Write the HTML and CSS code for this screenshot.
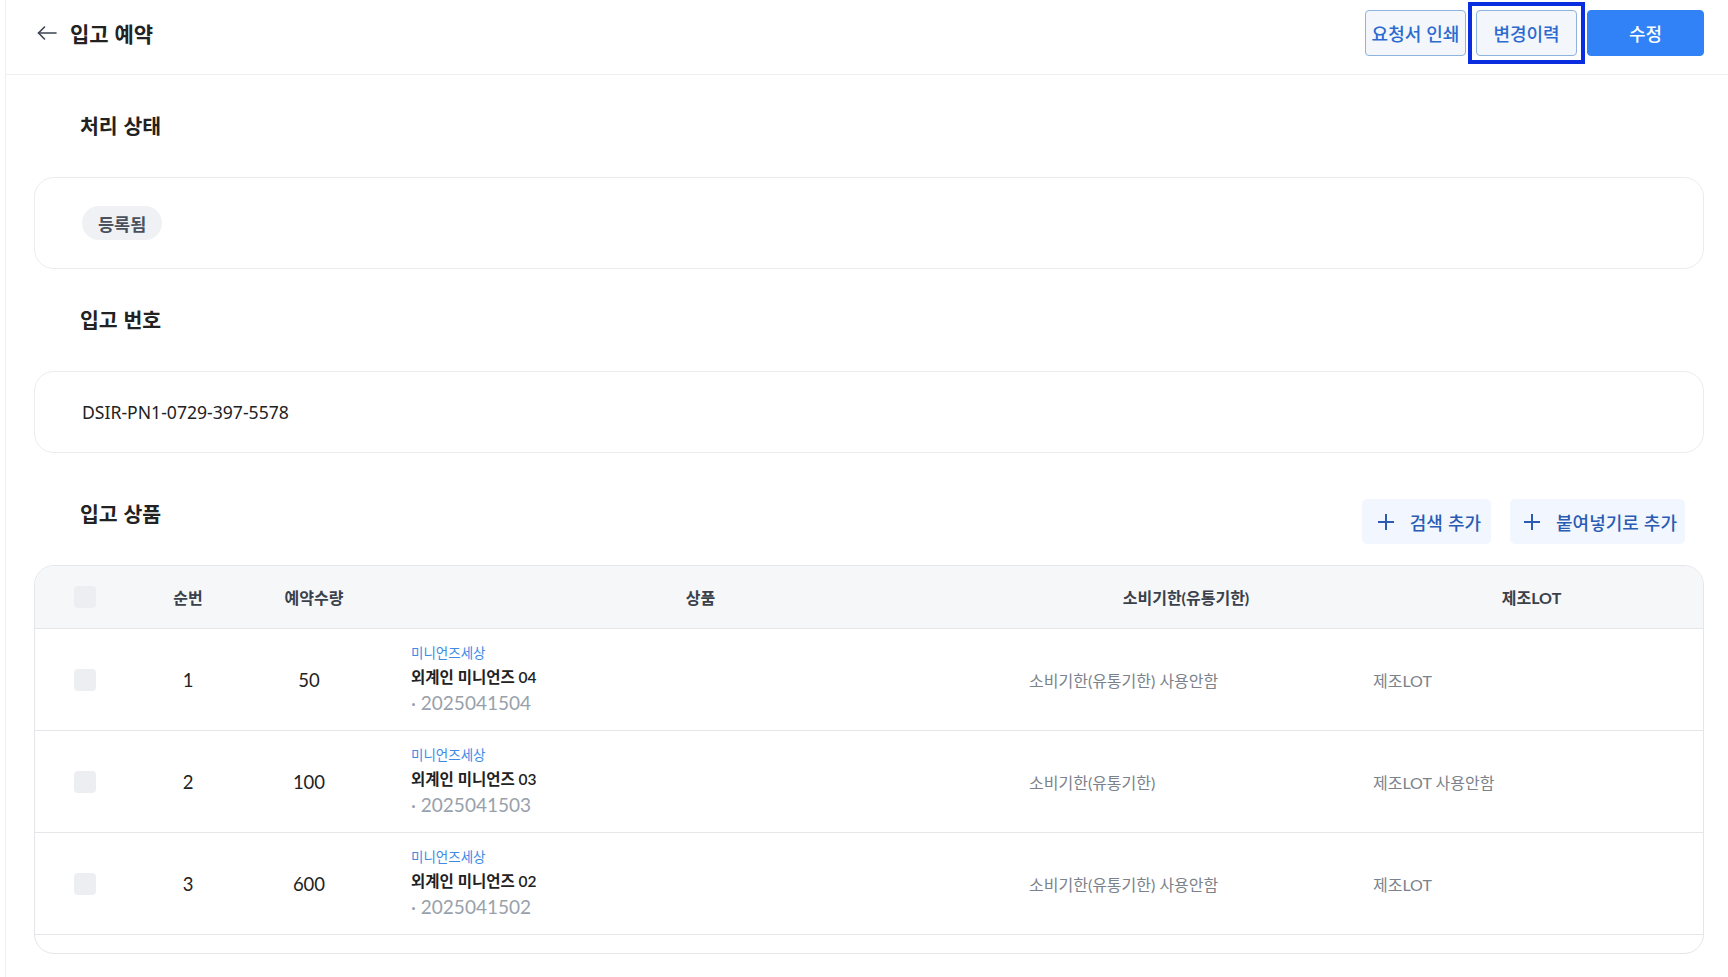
FILE: index.html
```html
<!DOCTYPE html>
<html lang="ko">
<head>
    <meta charset="UTF-8">
    <meta name="viewport" content="width=device-width, initial-scale=1.0">
    <title>입고 예약</title>
    <link rel="stylesheet" href="styles.css">
</head>
<body>
    <div class="page">
        <header class="topbar">
            <div class="topbar-title">
                <button class="back-btn" type="button" aria-label="뒤로">
                    <svg width="20" height="20" viewBox="0 0 20 20" fill="none" stroke="#3d4450" stroke-width="1.6" stroke-linecap="round" stroke-linejoin="round">
                        <path d="M19 10H1.5"/>
                        <path d="M7.5 4L1.5 10L7.5 16"/>
                    </svg>
                </button>
                <h1>입고 예약</h1>
            </div>
            <div class="topbar-actions">
                <button class="btn btn-outline" type="button">요청서 인쇄</button>
                <button class="btn btn-outline is-focused" type="button">변경이력</button>
                <button class="btn btn-primary" type="button">수정</button>
            </div>
        </header>

        <main class="content">
            <!-- 처리 상태 -->
            <section class="section">
                <div class="section-head">
                    <h2>처리 상태</h2>
                </div>
                <div class="card card-status">
                    <span class="badge">등록됨</span>
                </div>
            </section>

            <!-- 입고 번호 -->
            <section class="section">
                <div class="section-head">
                    <h2>입고 번호</h2>
                </div>
                <div class="card card-number">
                    <span class="receipt-no">DSIR-PN1-0729-397-5578</span>
                </div>
            </section>

            <!-- 입고 상품 -->
            <section class="section section-products">
                <div class="section-head">
                    <h2>입고 상품</h2>
                    <div class="head-actions">
                        <button class="btn-add" type="button">
                            <svg width="18" height="18" viewBox="0 0 18 18" fill="none" stroke="#2a5cb3" stroke-width="2"><path d="M9 1v16M1 9h16"/></svg>
                            검색 추가
                        </button>
                        <button class="btn-add" type="button">
                            <svg width="18" height="18" viewBox="0 0 18 18" fill="none" stroke="#2a5cb3" stroke-width="2"><path d="M9 1v16M1 9h16"/></svg>
                            붙여넣기로 추가
                        </button>
                    </div>
                </div>

                <div class="table-wrap">
                    <table class="product-table">
                        <colgroup>
                            <col class="col-check">
                            <col class="col-seq">
                            <col class="col-qty">
                            <col class="col-product">
                            <col class="col-expiry">
                            <col class="col-lot">
                        </colgroup>
                        <thead>
                            <tr>
                                <th><span class="checkbox"></span></th>
                                <th>순번</th>
                                <th>예약수량</th>
                                <th>상품</th>
                                <th>소비기한(유통기한)</th>
                                <th>제조LOT</th>
                            </tr>
                        </thead>
                        <tbody id="productRows">
                            <tr>
                                <td class="center"><span class="checkbox"></span></td>
                                <td class="center num">1</td>
                                <td class="center num qty">50</td>
                                <td class="product">
                                    <div class="brand">미니언즈세상</div>
                                    <div class="name">외계인 미니언즈 04</div>
                                    <div class="code">· 2025041504</div>
                                </td>
                                <td class="muted">소비기한(유통기한) 사용안함</td>
                                <td class="muted">제조LOT</td>
                            </tr>
                            <tr>
                                <td class="center"><span class="checkbox"></span></td>
                                <td class="center num">2</td>
                                <td class="center num qty">100</td>
                                <td class="product">
                                    <div class="brand">미니언즈세상</div>
                                    <div class="name">외계인 미니언즈 03</div>
                                    <div class="code">· 2025041503</div>
                                </td>
                                <td class="muted">소비기한(유통기한)</td>
                                <td class="muted">제조LOT 사용안함</td>
                            </tr>
                            <tr>
                                <td class="center"><span class="checkbox"></span></td>
                                <td class="center num">3</td>
                                <td class="center num qty">600</td>
                                <td class="product">
                                    <div class="brand">미니언즈세상</div>
                                    <div class="name">외계인 미니언즈 02</div>
                                    <div class="code">· 2025041502</div>
                                </td>
                                <td class="muted">소비기한(유통기한) 사용안함</td>
                                <td class="muted">제조LOT</td>
                            </tr>
                        </tbody>
                    </table>
                </div>
            </section>
        </main>
    </div>
</body>
</html>
```

FILE: styles.css
```css
/* 기본 */
body {
    margin: 0;
    font-family: "Noto Sans CJK KR", "Noto Sans", sans-serif;
    color: #191f28;
    background: #fff;
}

button {
    font-family: inherit;
    cursor: pointer;
}

.page {
    margin-left: 5px;
    border-left: 1px solid #eef0f2;
    min-height: 100vh;
}

/* 상단 바 */
.topbar {
    box-sizing: border-box;
    height: 75px;
    padding: 10px 24px 0 31px;
    display: flex;
    align-items: flex-start;
    justify-content: space-between;
    border-bottom: 1px solid #eef0f3;
}

.topbar-title {
    display: flex;
    align-items: center;
    gap: 13px;
    height: 46px;
}

.back-btn {
    border: 0;
    padding: 0;
    background: none;
    display: flex;
    width: 20px;
    height: 20px;
}

.topbar-title h1 {
    margin: 0;
    font-size: 21px;
    font-weight: 700;
    color: #222;
}

.topbar-actions {
    display: flex;
    gap: 10px;
}

.btn {
    height: 46px;
    border-radius: 4px;
    font-size: 18px;
    font-weight: 500;
    padding: 0;
}

.btn-outline {
    width: 101px;
    background: #f3f6fa;
    border: 1px solid #8fb3e0;
    color: #2b6bd1;
}

/* 포커스 표시 (각진 테두리) */
.btn-outline.is-focused {
    position: relative;
    outline: none;
}

.btn-outline.is-focused::after {
    content: "";
    position: absolute;
    inset: -9px;
    border: 4px solid #0b2de0;
}

.btn-primary {
    width: 117px;
    background: #3182f6;
    border: 1px solid #3182f6;
    color: #fff;
}

/* 본문 */
.content {
    padding: 36px 24px 24px 28px;
}

.section + .section {
    margin-top: 36px;
}

.section-products {
    margin-top: 46px !important;
}

.section-head {
    min-height: 45px;
    display: flex;
    align-items: flex-start;
    justify-content: space-between;
    padding: 0 19px 0 46px;
    margin-bottom: 21px;
}

.section-head h2 {
    margin: 0;
    font-size: 20.5px;
    line-height: 28px;
    font-weight: 700;
    color: #222;
}

.card {
    border: 1px solid #ebecee;
    border-radius: 20px;
    padding: 0 47px;
    display: flex;
    align-items: center;
}

.card-status {
    height: 90px;
}

.card-number {
    height: 80px;
}

.badge {
    display: inline-flex;
    align-items: center;
    height: 34px;
    padding: 0 16px;
    border-radius: 17px;
    background: #eff1f4;
    color: #4a515c;
    font-size: 17.5px;
    font-weight: 700;
}

.receipt-no {
    font-family: "Noto Sans", "Noto Sans CJK KR", sans-serif;
    font-size: 17.6px;
    color: #222;
}

/* 상품 추가 버튼 */
.head-actions {
    display: flex;
    gap: 19px;
}

.btn-add {
    height: 45px;
    display: flex;
    align-items: center;
    gap: 15px;
    padding: 0 10px 0 15px;
    border: 0;
    border-radius: 5px;
    background: #f2f6fe;
    color: #2a5cb3;
    font-size: 18px;
    font-weight: 500;
}

.btn-add + .btn-add {
    padding: 0 8px 0 13px;
}

/* 상품 테이블 */
.table-wrap {
    border: 1px solid #e4e6ea;
    border-radius: 20px;
    overflow: hidden;
    padding-bottom: 18px;
}

.product-table {
    width: 100%;
    border-collapse: collapse;
    table-layout: fixed;
    font-family: Lato, "Noto Sans CJK KR", sans-serif;
}

.col-check { width: 100px; }
.col-seq { width: 106px; }
.col-qty { width: 146px; }
.col-product { width: 627px; }
.col-expiry { width: 344px; }
.col-lot { width: 347px; }

.product-table th {
    height: 62px;
    background: #f6f7f8;
    border-bottom: 1px solid #e4e6ea;
    font-size: 16px;
    font-weight: 700;
    color: #3a414b;
    text-align: center;
    padding: 0;
}

.product-table td {
    height: 101px;
    border-bottom: 1px solid #e4e6ea;
    padding: 0 15px;
    vertical-align: middle;
}

.product-table td.center {
    text-align: center;
    padding: 0;
}

.product-table td.qty {
    padding-right: 10px;
}

.checkbox {
    display: inline-block;
    width: 22px;
    height: 22px;
    border-radius: 4px;
    background: #eceef2;
    vertical-align: middle;
}

.num {
    font-size: 18.5px;
    color: #222;
}

.product-table td.product {
    padding-left: 24px;
}

.brand {
    font-size: 13.5px;
    line-height: 18px;
    color: #3d8be6;
}

.name {
    margin-top: 4px;
    font-size: 15.5px;
    line-height: 22px;
    font-weight: 600;
    color: #222;
}

.code {
    margin-top: 2px;
    font-size: 19px;
    line-height: 26px;
    color: #98a1ab;
}

.muted {
    font-size: 16px;
    color: #7b828b;
}
```
